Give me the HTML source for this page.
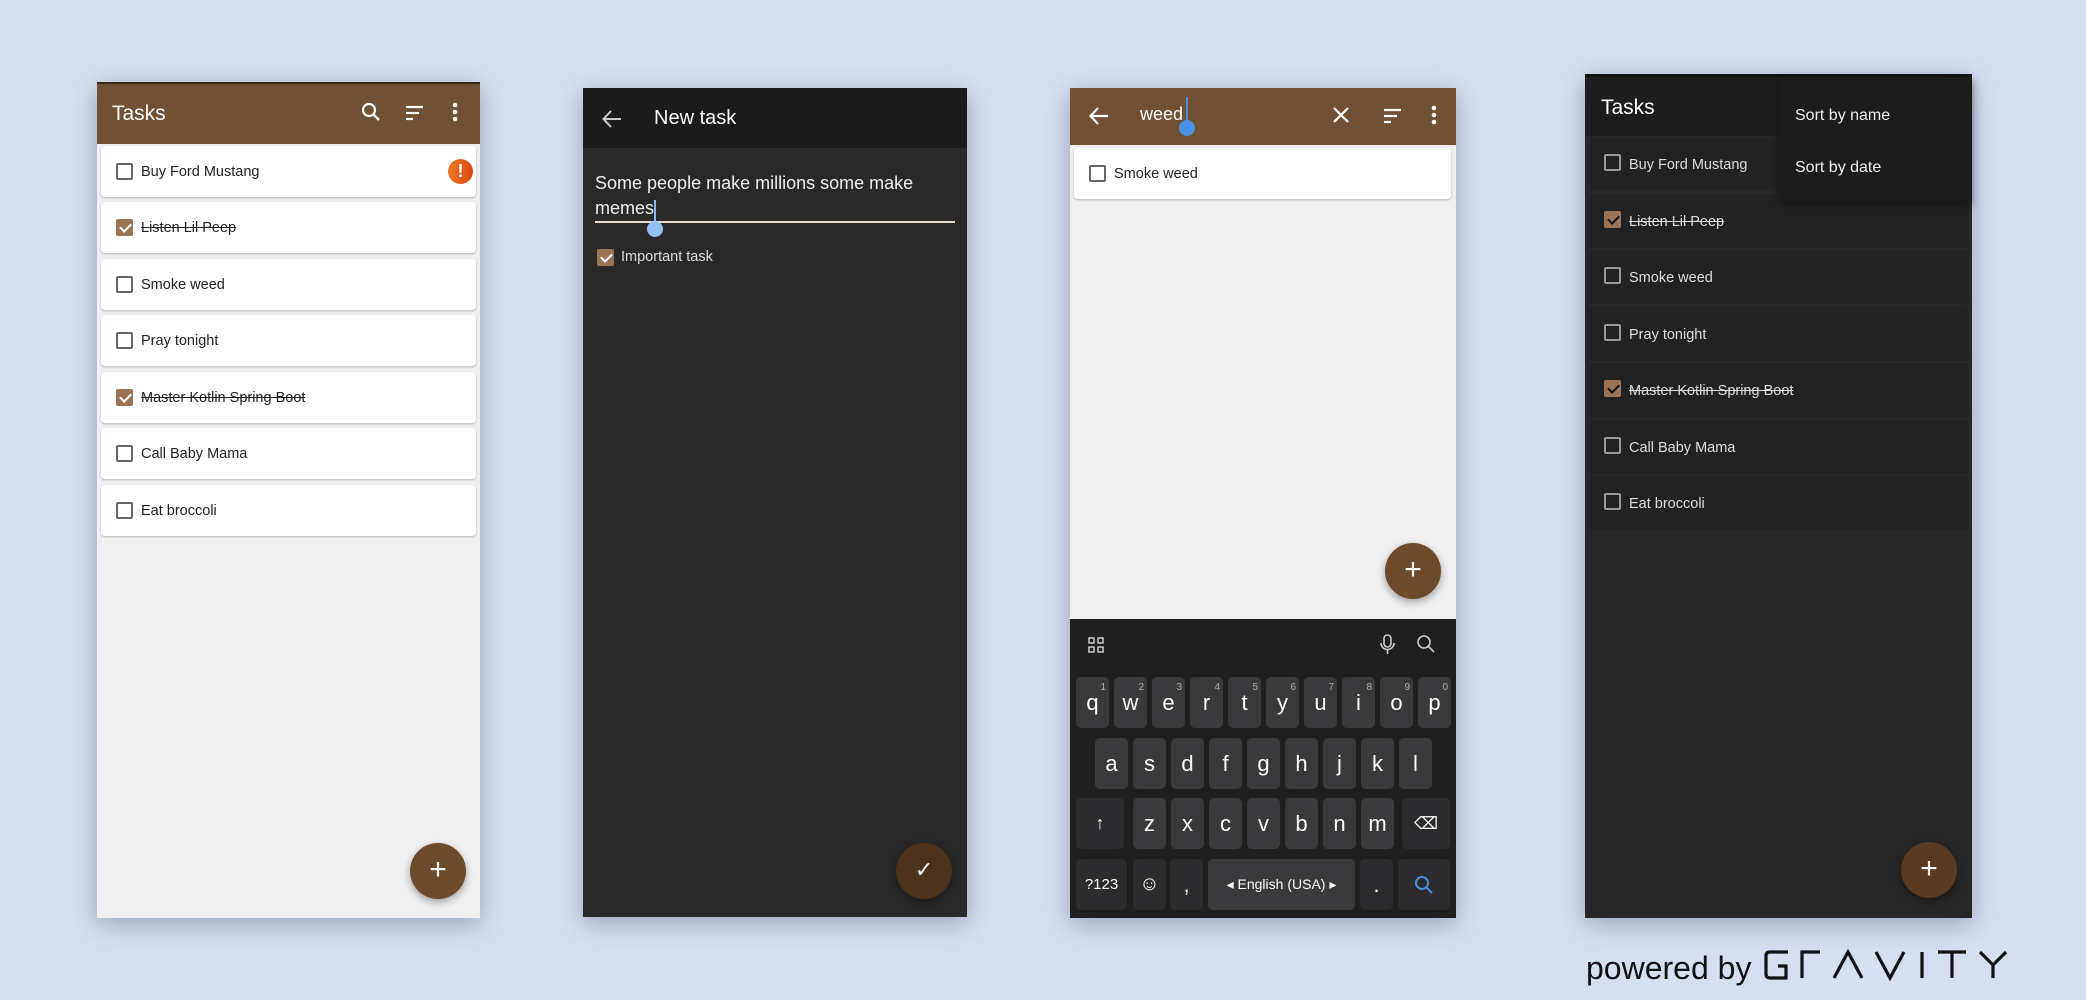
<!DOCTYPE html>
<html><head><meta charset="utf-8"><style>
*{margin:0;padding:0;box-sizing:border-box}
body{width:2086px;height:1000px;background:#d5dff0;position:relative;overflow:hidden;font-family:"Liberation Sans",sans-serif}
.ph{position:absolute;box-shadow:0 6px 24px rgba(40,50,80,.35)}
.abs{position:absolute}
.card{position:absolute;border-radius:4px;height:51px}
.l .card{background:#fff;box-shadow:0 1px 2px rgba(0,0,0,.25);left:4px;width:375px}
.d .card{background:#222;left:4px;width:380px;height:54px}
.cb{position:absolute;left:15px;top:17px;width:17px;height:17px;border:2px solid #666;border-radius:2px}
.d .cb{border-color:#9a9a9a}
.cb.on{background:#9b7456;border-color:#9b7456}
.cb.on:after{content:"";position:absolute;left:4px;top:0px;width:5px;height:9px;border:solid #fff;border-width:0 2px 2px 0;transform:rotate(45deg)}
.d .cb.on:after{border-color:#111}
.tx{position:absolute;left:40px;top:1px;line-height:51px;font-size:14.5px;color:#222}
.d .tx{color:#ddd;line-height:54px}
.s{text-decoration:line-through}
.fab{position:absolute;width:56px;height:56px;border-radius:50%;background:#6e4a2c;box-shadow:0 3px 8px rgba(0,0,0,.35);color:#fff;font-size:30px;text-align:center;line-height:54px}
.key{position:absolute;height:51px;width:33px;background:#3a3a3c;border-radius:5px;color:#fff;font-size:22px;text-align:center;line-height:51px}
.key i{position:absolute;right:3px;top:-15px;font-size:10px;font-style:normal;color:#aaa}
</style></head><body>

<!-- Phone 1 -->
<div class="ph l" style="left:97px;top:82px;width:383px;height:836px;background:#f0f0f0">
 <div class="abs" style="left:0;top:0;width:383px;height:62px;background:#725034;border-top:2px solid #3a2a1c"></div>
 <div class="abs" style="left:15px;top:20px;color:#fff;font-size:21px">Tasks</div>
 <svg class="abs" style="left:262px;top:18px" width="100" height="26" viewBox="0 0 100 26">
  <circle cx="10" cy="10" r="6" fill="none" stroke="#fff" stroke-width="2.2"/><line x1="14.5" y1="14.5" x2="20" y2="20" stroke="#fff" stroke-width="2.4"/>
  <g stroke="#fff" stroke-width="2.2"><line x1="47" y1="7" x2="64" y2="7"/><line x1="47" y1="13" x2="60" y2="13"/><line x1="47" y1="19" x2="54" y2="19"/></g>
  <circle cx="96" cy="5" r="2.3" fill="#fff"/><circle cx="96" cy="12" r="2.3" fill="#fff"/><circle cx="96" cy="19" r="2.3" fill="#fff"/>
 </svg>
 <div class="card" style="top:64px"><div class="cb"></div><div class="tx">Buy Ford Mustang</div>
  <div class="abs" style="left:347px;top:13px;width:25px;height:25px;border-radius:50%;background:linear-gradient(90deg,#ec7a2a,#d9460e);color:#fff;font-weight:bold;text-align:center;line-height:25px;font-size:18px">!</div></div>
 <div class="card" style="top:120px"><div class="cb on"></div><div class="tx s">Listen Lil Peep</div></div>
 <div class="card" style="top:177px"><div class="cb"></div><div class="tx">Smoke weed</div></div>
 <div class="card" style="top:233px"><div class="cb"></div><div class="tx">Pray tonight</div></div>
 <div class="card" style="top:290px"><div class="cb on"></div><div class="tx s">Master Kotlin Spring Boot</div></div>
 <div class="card" style="top:346px"><div class="cb"></div><div class="tx">Call Baby Mama</div></div>
 <div class="card" style="top:403px"><div class="cb"></div><div class="tx">Eat broccoli</div></div>
 <div class="fab" style="left:313px;top:761px">+</div>
</div>

<!-- Phone 2 -->
<div class="ph" style="left:583px;top:88px;width:384px;height:829px;background:#292929">
 <div class="abs" style="left:0;top:0;width:384px;height:60px;background:#1b1b1b"></div>
 <svg class="abs" style="left:18px;top:20px" width="22" height="22" viewBox="0 0 22 22"><path d="M20 11H3M10 3L2.5 11L10 19" fill="none" stroke="#ccc" stroke-width="2"/></svg>
 <div class="abs" style="left:71px;top:19px;color:#fff;font-size:20px">New task</div>
 <div class="abs" style="left:12px;top:83px;color:#eee;font-size:18px;line-height:25px;width:370px">Some people make millions some make<br>memes</div>
 <div class="abs" style="left:12px;top:133px;width:360px;height:2px;background:#e6dcc8"></div>
 <div class="abs" style="left:71px;top:112px;width:2px;height:28px;background:#8ab8f0"></div>
 <div class="abs" style="left:64px;top:133px;width:16px;height:16px;border-radius:50%;background:#93c1f7"></div>
 <div class="cb on abs" style="left:14px;top:161px"></div>
 <div class="abs" style="left:38px;top:161px;color:#ddd;font-size:14.5px">Important task</div>
 <div class="fab" style="left:313px;top:755px;background:#4d321b;font-size:22px">✓</div>
</div>

<!-- Phone 3 -->
<div class="ph l" style="left:1070px;top:88px;width:386px;height:830px;background:#f0f0f0">
 <div class="abs" style="left:0;top:0;width:386px;height:57px;background:#725034"></div>
 <svg class="abs" style="left:18px;top:17px" width="22" height="22" viewBox="0 0 22 22"><path d="M20 11H3M10 3L2.5 11L10 19" fill="none" stroke="#fff" stroke-width="2.2"/></svg>
 <div class="abs" style="left:70px;top:16px;color:#fff;font-size:18px">weed</div>
 <div class="abs" style="left:116px;top:9px;width:2px;height:28px;background:#4a90e2"></div>
 <div class="abs" style="left:109px;top:32px;width:16px;height:16px;border-radius:50%;background:#4a90e2"></div>
 <svg class="abs" style="left:262px;top:17px" width="115" height="24" viewBox="0 0 115 24">
  <path d="M2 3L16 17M16 3L2 17" stroke="#fff" stroke-width="2.2"/>
  <g stroke="#fff" stroke-width="2.2"><line x1="52" y1="5" x2="69" y2="5"/><line x1="52" y1="11" x2="65" y2="11"/><line x1="52" y1="17" x2="59" y2="17"/></g>
  <circle cx="102" cy="3" r="2.3" fill="#fff"/><circle cx="102" cy="10" r="2.3" fill="#fff"/><circle cx="102" cy="17" r="2.3" fill="#fff"/>
 </svg>
 <div class="card" style="top:60px;width:377px"><div class="cb"></div><div class="tx">Smoke weed</div></div>
 <div class="fab" style="left:315px;top:455px">+</div>
 <div class="abs" style="left:0;top:531px;width:386px;height:299px;background:#1f1f20">
  <svg class="abs" style="left:18px;top:18px" width="16" height="16" viewBox="0 0 16 16" fill="none" stroke="#ccc" stroke-width="1.5"><rect x="1" y="1" width="5" height="5"/><rect x="10" y="1" width="5" height="5"/><rect x="1" y="10" width="5" height="5"/><rect x="10" y="10" width="5" height="5"/></svg>
  <svg class="abs" style="left:310px;top:15px" width="60" height="22" viewBox="0 0 60 22" fill="none" stroke="#ccc" stroke-width="1.6"><rect x="4" y="1" width="7" height="12" rx="3.5"/><path d="M1 9a6.5 6.5 0 0 0 13 0M7.5 16v4"/><circle cx="44" cy="8" r="6"/><line x1="48.5" y1="12.5" x2="54" y2="18"/></svg>
 </div>
</div>
<div class="abs" style="left:0;top:0">
 <div class="key" style="left:1076px;top:677px">q<i>1</i></div>
 <div class="key" style="left:1114px;top:677px">w<i>2</i></div>
 <div class="key" style="left:1152px;top:677px">e<i>3</i></div>
 <div class="key" style="left:1190px;top:677px">r<i>4</i></div>
 <div class="key" style="left:1228px;top:677px">t<i>5</i></div>
 <div class="key" style="left:1266px;top:677px">y<i>6</i></div>
 <div class="key" style="left:1304px;top:677px">u<i>7</i></div>
 <div class="key" style="left:1342px;top:677px">i<i>8</i></div>
 <div class="key" style="left:1380px;top:677px">o<i>9</i></div>
 <div class="key" style="left:1418px;top:677px">p<i>0</i></div>
 <div class="key" style="left:1095px;top:738px">a</div>
 <div class="key" style="left:1133px;top:738px">s</div>
 <div class="key" style="left:1171px;top:738px">d</div>
 <div class="key" style="left:1209px;top:738px">f</div>
 <div class="key" style="left:1247px;top:738px">g</div>
 <div class="key" style="left:1285px;top:738px">h</div>
 <div class="key" style="left:1323px;top:738px">j</div>
 <div class="key" style="left:1361px;top:738px">k</div>
 <div class="key" style="left:1399px;top:738px">l</div>
 <div class="key" style="left:1076px;top:798px;width:48px;background:#2c2c2e;font-size:18px">↑</div>
 <div class="key" style="left:1133px;top:798px">z</div>
 <div class="key" style="left:1171px;top:798px">x</div>
 <div class="key" style="left:1209px;top:798px">c</div>
 <div class="key" style="left:1247px;top:798px">v</div>
 <div class="key" style="left:1285px;top:798px">b</div>
 <div class="key" style="left:1323px;top:798px">n</div>
 <div class="key" style="left:1361px;top:798px">m</div>
 <div class="key" style="left:1402px;top:798px;width:48px;background:#2c2c2e;font-size:17px">⌫</div>
 <div class="key" style="left:1076px;top:859px;width:51px;background:#2c2c2e;font-size:15px">?123</div>
 <div class="key" style="left:1133px;top:859px;background:#2c2c2e;font-size:20px">☺</div>
 <div class="key" style="left:1170px;top:859px;background:#2c2c2e">,</div>
 <div class="key" style="left:1208px;top:859px;width:147px;font-size:14px">◂ English (USA) ▸</div>
 <div class="key" style="left:1360px;top:859px;background:#2c2c2e">.</div>
 <div class="key" style="left:1398px;top:859px;width:52px;background:#2c2c2e">
  <svg style="margin-top:16px" width="20" height="20" viewBox="0 0 20 20" fill="none" stroke="#4a8fd8" stroke-width="2"><circle cx="8" cy="8" r="6"/><line x1="12.5" y1="12.5" x2="18" y2="18"/></svg></div>
</div>

<!-- Phone 4 -->
<div class="ph d" style="left:1585px;top:74px;width:387px;height:844px;background:#272727">
 <div class="abs" style="left:0;top:0;width:387px;height:62px;background:#1d1d1d;border-top:3px solid #111"></div>
 <div class="abs" style="left:16px;top:22px;color:#fff;font-size:21px">Tasks</div>
 <div class="card" style="top:63px"><div class="cb"></div><div class="tx">Buy Ford Mustang</div></div>
 <div class="card" style="top:120px"><div class="cb on"></div><div class="tx s">Listen Lil Peep</div></div>
 <div class="card" style="top:176px"><div class="cb"></div><div class="tx">Smoke weed</div></div>
 <div class="card" style="top:233px"><div class="cb"></div><div class="tx">Pray tonight</div></div>
 <div class="card" style="top:289px"><div class="cb on"></div><div class="tx s">Master Kotlin Spring Boot</div></div>
 <div class="card" style="top:346px"><div class="cb"></div><div class="tx">Call Baby Mama</div></div>
 <div class="card" style="top:402px"><div class="cb"></div><div class="tx">Eat broccoli</div></div>
 <div class="abs" style="left:194px;top:3px;width:193px;height:124px;background:#1c1c1c;box-shadow:0 3px 8px rgba(0,0,0,.4)">
  <div class="abs" style="left:16px;top:30px;color:#eee;font-size:16px">Sort by name</div>
  <div class="abs" style="left:16px;top:82px;color:#eee;font-size:16px">Sort by date</div>
 </div>
 <div class="fab" style="left:316px;top:768px;background:#5a3b22">+</div>
</div>

<div class="abs" style="left:1586px;top:950px;font-size:32px;color:#111">powered by</div>
<svg class="abs" style="left:1762px;top:948px" width="260" height="40" viewBox="0 0 260 40" fill="none" stroke="#111" stroke-width="3.2">
 <path d="M26 4H8Q4 4 4 8V26Q4 30 8 30H24V18H16"/>
 <path d="M40 30V4H58"/>
 <path d="M72 30L86 4L100 30"/>
 <path d="M114 4L128 30L142 4"/>
 <path d="M160 4V30"/>
 <path d="M176 4H204M190 4V30"/>
 <path d="M218 4L231 17L244 4M231 17V30"/>
</svg>
</body></html>
